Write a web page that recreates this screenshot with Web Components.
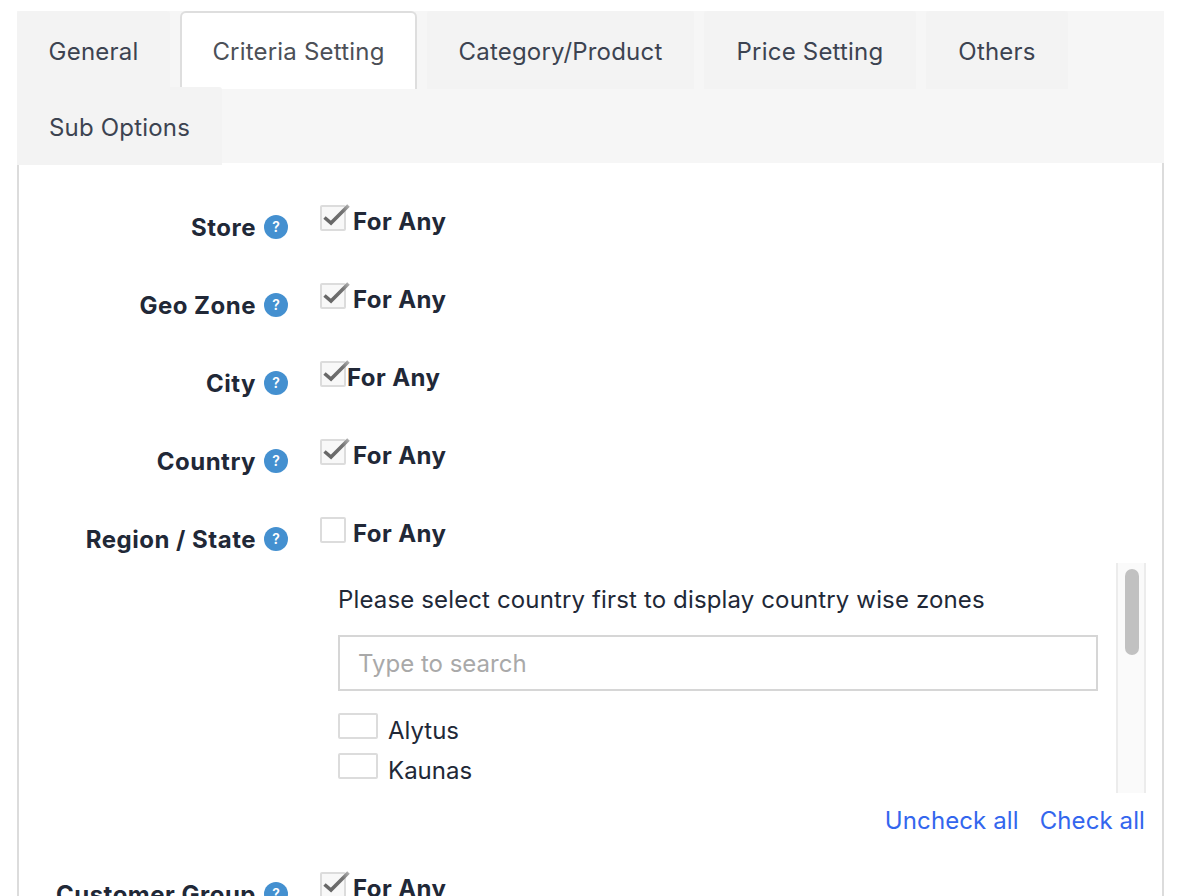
<!DOCTYPE html>
<html>
<head>
<meta charset="utf-8">
<style>
  html, body { margin: 0; height: 896px; overflow: hidden; background: #fff; }
  body { font-family: Inter, "Liberation Sans", sans-serif; font-size: 24px; color: #212837; }
</style>
</head>
<body>
<settings-page>
  <tab-bar>
    <tab-item style="--w:153px">General</tab-item>
    <tab-item active style="--w:237px">Criteria Setting</tab-item>
    <tab-item style="--w:267px">Category/Product</tab-item>
    <tab-item style="--w:212px">Price Setting</tab-item>
    <tab-item style="--w:142px">Others</tab-item>
    <tab-item style="--w:205px">Sub Options</tab-item>
  </tab-bar>
  <tab-panel>
    <criteria-row label="Store" checked>For Any</criteria-row>
    <criteria-row label="Geo Zone" checked>For Any</criteria-row>
    <criteria-row label="City" checked tight>For Any</criteria-row>
    <criteria-row label="Country" checked>For Any</criteria-row>
    <criteria-row label="Region / State">For Any
      <zone-picker slot="extra" hint="Please select country first to display country wise zones">
        <zone-option>Alytus</zone-option>
        <zone-option>Kaunas</zone-option>
      </zone-picker>
    </criteria-row>
    <criteria-row label="Customer Group" checked>For Any</criteria-row>
  </tab-panel>
</settings-page>

<script>
// shell: just the page margins
class SettingsPage extends HTMLElement {
  constructor() {
    super();
    this.attachShadow({ mode: "open" });
    this.shadowRoot.innerHTML = `
      <style>
        :host { display: block; padding: 11px 32px 0 17px; }
      </style>
      <slot></slot>
    `;
  }
}

class TabBar extends HTMLElement {
  constructor() {
    super();
    this.attachShadow({ mode: "open" });
    this.shadowRoot.innerHTML = `
      <style>
        :host { display: flex; flex-wrap: wrap; align-content: flex-start; column-gap: 10px; row-gap: 0;
                height: 152px; background: #f6f6f6; position: relative; z-index: 1; }
      </style>
      <slot></slot>
    `;
  }
}

// tabs are 2px taller than their row, so the wrapped one overlaps the row above
class TabItem extends HTMLElement {
  constructor() {
    super();
    this.attachShadow({ mode: "open" });
    this.shadowRoot.innerHTML = `
      <style>
        :host { display: flex; align-items: center; justify-content: center; box-sizing: border-box;
                width: var(--w); height: 78px; margin-bottom: -2px; padding-top: 2px; background: #f3f3f3;
                color: #3c4351; letter-spacing: .2px; border-radius: 3px 3px 0 0; white-space: nowrap; }
        :host([active]) { background: #fff; color: #4c5057; border: 2px solid #dedede; border-bottom: 0;
                padding-top: 0; border-radius: 6px 6px 0 0; }
      </style>
      <slot></slot>
    `;
  }
}

class TabPanel extends HTMLElement {
  constructor() {
    super();
    this.attachShadow({ mode: "open" });
    this.shadowRoot.innerHTML = `
      <style>
        :host { display: block; height: 800px; padding: 42px 16px 0 0; background: #fff;
                border-left: 2px solid #dcdcdc; border-right: 2px solid #dcdcdc; }
      </style>
      <slot></slot>
    `;
  }
}

// one line of the form: label + help dot on the left, checkbox on the right
class CriteriaRow extends HTMLElement {
  constructor() {
    super();
    this.attachShadow({ mode: "open" });
    this.shadowRoot.innerHTML = `
      <style>
        :host { display: grid; grid-template-columns: 269px 1fr; column-gap: 32px; margin-bottom: 43px; }
        .label { display: flex; justify-content: flex-end; align-items: center; gap: 8px; height: 26px;
                 margin-top: 9px; font-weight: 700; letter-spacing: .5px; white-space: nowrap; }
        .any { display: flex; align-items: flex-start; gap: 7px; height: 26px;
               font-weight: 700; letter-spacing: .42px; white-space: nowrap; }
        .any span { line-height: 32px; margin-top: 1px; }
        :host([tight]) .any { gap: 1px; }
        .dot { flex: none; width: 24px; height: 24px; }
        text { font: 600 14px Inter, "Liberation Sans", sans-serif; fill: #fff; letter-spacing: 0; }
      </style>
      <div class="label">
        <span id="name"></span>
        <svg class="dot" viewBox="0 0 24 24">
          <circle cx="12" cy="12" r="12" fill="#4490d0"/>
          <text x="12" y="17" text-anchor="middle">?</text>
        </svg>
      </div>
      <div>
        <div class="any"><check-box></check-box><span><slot></slot></span></div>
        <slot name="extra"></slot>
      </div>
    `;
    this.shadowRoot.getElementById("name").textContent = this.getAttribute("label");
    if (this.hasAttribute("checked")) {
      this.shadowRoot.querySelector("check-box").setAttribute("checked", "");
    }
  }
}

class CheckBox extends HTMLElement {
  constructor() {
    super();
    this.attachShadow({ mode: "open" });
    this.shadowRoot.innerHTML = `
      <style>
        :host { display: block; flex: none; position: relative; box-sizing: border-box; width: 26px; height: 26px;
                border: 2px solid #dcdcdc; border-radius: 2px; background: #fff; }
        :host([wide]) { width: 40px; }
        svg { position: absolute; left: 0; top: 0; display: none; overflow: visible; }
        :host([checked]) svg { display: block; }
        :host([checked]) { background: #f8f8f8; }
      </style>
      <svg width="24" height="24" viewBox="0 0 24 24">
        <defs>
          <linearGradient id="tick" gradientUnits="userSpaceOnUse" x1="9" y1="16" x2="27" y2="-2">
            <stop offset="0" stop-color="#686868"/>
            <stop offset=".65" stop-color="#727272"/>
            <stop offset="1" stop-color="#b5b5b5"/>
          </linearGradient>
          <filter id="soft" x="-20%" y="-20%" width="140%" height="140%"><feGaussianBlur stdDeviation=".45"/></filter>
        </defs>
        <path d="M2.5 10.5 L9 16 L26.5 -1.5" fill="none" stroke="url(#tick)" stroke-width="3.6" filter="url(#soft)"/>
      </svg>
    `;
  }
}

// box with its own scrollbar, the search input and the zones
class ZonePicker extends HTMLElement {
  constructor() {
    super();
    this.attachShadow({ mode: "open" });
    this.shadowRoot.innerHTML = `
      <style>
        :host { display: block; margin: 20px 0 -4px 18px; font-weight: 400; }
        .box { display: flex; height: 230px; overflow: hidden; }
        .list { flex: 1; padding-top: 21px; min-width: 0; }
        .hint { line-height: 32px; letter-spacing: .14px; white-space: nowrap; }
        .search { box-sizing: border-box; height: 56px; margin: 19px 18px 22px 0; padding: 0 18px;
                  display: flex; align-items: center; border: 2px solid #d6d6d6; color: #a9a9a9; }
        .track { flex: none; box-sizing: border-box; width: 30px; padding: 6px 6px 0; background: #fafafa;
                 border-left: 2px solid #ececec; border-right: 2px solid #ececec; }
        .thumb { width: 14px; height: 86px; margin: 0 1px; border-radius: 7px; background: #c1c1c1; }
        .links { display: flex; justify-content: flex-end; gap: 21px; margin-top: 16px; padding-right: 1px;
                 line-height: 24px; color: #3366ee; letter-spacing: .1px; }
      </style>
      <div class="box">
        <div class="list">
          <div class="hint"></div>
          <div class="search">Type to search</div>
          <slot></slot>
        </div>
        <div class="track"><div class="thumb"></div></div>
      </div>
      <div class="links"><span>Uncheck all</span><span>Check all</span></div>
    `;
    this.shadowRoot.querySelector(".hint").textContent = this.getAttribute("hint");
  }
}

class ZoneOption extends HTMLElement {
  constructor() {
    super();
    this.attachShadow({ mode: "open" });
    this.shadowRoot.innerHTML = `
      <style>
        :host { display: flex; align-items: flex-start; gap: 10px; height: 40px; }
        span { line-height: 32px; margin-top: 2px; }
      </style>
      <check-box wide></check-box><span><slot></slot></span>
    `;
  }
}

customElements.define("settings-page", SettingsPage);
customElements.define("tab-bar", TabBar);
customElements.define("tab-item", TabItem);
customElements.define("tab-panel", TabPanel);
customElements.define("criteria-row", CriteriaRow);
customElements.define("check-box", CheckBox);
customElements.define("zone-picker", ZonePicker);
customElements.define("zone-option", ZoneOption);
</script>
</body>
</html>
